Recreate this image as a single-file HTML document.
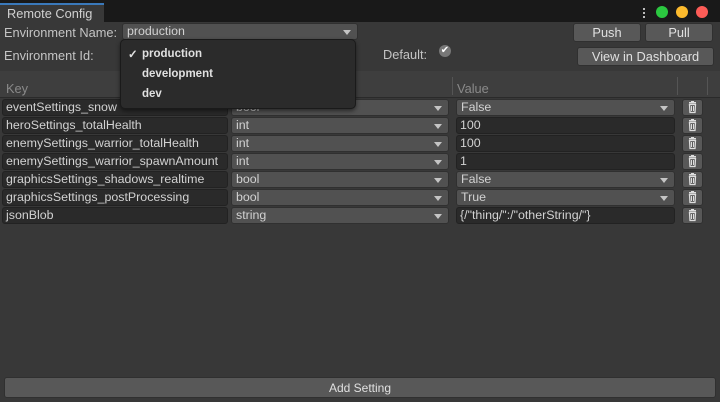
<!DOCTYPE html>
<html><head><style>
*{box-sizing:border-box;margin:0;padding:0}
body{width:720px;height:402px;background:#383838;font-family:"Liberation Sans",sans-serif;font-size:12.4px;color:#c4c4c4;position:relative;overflow:hidden}
.a{position:absolute}
.dd{background:#515151;border-radius:3px;border:1px solid #303030;padding-left:4px;line-height:15px;color:#d2d2d2}
.dd:after{content:"";position:absolute;right:6px;top:6px;border-left:4px solid transparent;border-right:4px solid transparent;border-top:5px solid #c4c4c4}
.tf{background:#2a2a2a;border:1px solid #222;border-radius:3px;padding-left:3px;line-height:15px;color:#d2d2d2}
.btn{background:#585858;border:1px solid #303030;border-radius:3px;text-align:center;color:#e0e0e0;line-height:17px;font-size:12.8px}
.tr{background:#585858;border:1px solid #303030;border-radius:3px;width:21px;height:17px}
</style></head><body>
<div class="a" style="left:0;top:0;width:720px;height:22px;background:#191919"></div>
<div class="a" style="left:0;top:3px;width:104px;height:19px;background:#383838;border-top:2px solid #3a79bb;padding-left:7px;line-height:17px;font-size:12.8px;color:#d0d0d0">Remote Config</div>
<div class="a" style="left:643px;top:8px;width:2px;height:10px;border-left:2px dotted #bbb"></div>
<div class="a" style="left:656px;top:6px;width:12px;height:12px;border-radius:50%;background:#2bc840"></div>
<div class="a" style="left:676px;top:6px;width:12px;height:12px;border-radius:50%;background:#fdbb2d"></div>
<div class="a" style="left:696px;top:6px;width:12px;height:12px;border-radius:50%;background:#fd5c57"></div>
<div class="a" style="left:4px;top:25px;font-size:12.8px">Environment Name:</div>
<div class="a dd" style="left:122px;top:23px;width:236px;height:17px">production</div>
<div class="a" style="left:4px;top:48px;font-size:12.8px">Environment Id:</div>
<div class="a" style="left:383px;top:47px;font-size:12.8px">Default:</div>
<div class="a" style="left:439px;top:45px;width:12px;height:12px;border-radius:50%;background:#777;color:#fff;font-size:10px;line-height:12px;text-align:center">✔</div>
<div class="a btn" style="left:573px;top:23px;width:68px;height:19px">Push</div>
<div class="a btn" style="left:645px;top:23px;width:68px;height:19px">Pull</div>
<div class="a btn" style="left:577px;top:47px;width:137px;height:19px">View in Dashboard</div>
<div class="a" style="left:0;top:71px;width:720px;height:27px;background:#3e3e3e;border-bottom:1px solid #2a2a2a"></div>
<div class="a" style="left:6px;top:81px;color:#8a8a8a;font-size:12.8px">Key</div>
<div class="a" style="left:457px;top:81px;color:#8a8a8a;font-size:12.8px">Value</div>
<div class="a" style="left:452px;top:77px;width:1px;height:18px;background:#555"></div>
<div class="a" style="left:677px;top:77px;width:1px;height:18px;background:#555"></div>
<div class="a" style="left:707px;top:77px;width:1px;height:18px;background:#555"></div>

<div id="rows"></div>
<script>
var R=[["eventSettings_snow","bool","False",1],["heroSettings_totalHealth","int","100",0],["enemySettings_warrior_totalHealth","int","100",0],["enemySettings_warrior_spawnAmount","int","1",0],["graphicsSettings_shadows_realtime","bool","False",1],["graphicsSettings_postProcessing","bool","True",1],["jsonBlob","string","{/\"thing/\":/\"otherString/\"}",0]];
var h="";R.forEach(function(r,i){var y=99+i*18;
h+='<div class="a tf" style="left:2px;top:'+y+'px;width:226px;height:17px">'+r[0]+'</div>';
h+='<div class="a dd" style="left:231px;top:'+y+'px;width:218px;height:17px">'+r[1]+'</div>';
h+='<div class="a '+(r[3]?'dd':'tf')+'" style="left:456px;top:'+y+'px;width:219px;height:17px">'+r[2].replace(/</g,"&lt;")+'</div>';
h+='<div class="a tr" style="left:682px;top:'+y+'px"><svg width="19" height="15" viewBox="0 0 19 15"><rect x="6" y="2" width="7" height="1.5" fill="#ddd"/><rect x="8" y="1" width="3" height="1.5" fill="#ddd"/><path d="M6.5 4.5h6l-.5 8h-5z" fill="none" stroke="#ddd" stroke-width="1.3"/><path d="M8.5 6v5M10.5 6v5" stroke="#ddd"/></svg></div>';});
document.getElementById("rows").innerHTML=h;
</script>
<div class="a" style="left:120px;top:39px;width:236px;height:70px;background:#2b2b2b;border:1px solid #1a1a1a;border-radius:5px;box-shadow:0 2px 4px rgba(0,0,0,.5);font-weight:bold;color:#e0e0e0;font-size:11.5px">
<div class="a" style="left:7px;top:7px">✓</div>
<div class="a" style="left:21px;top:8px">production</div>
<div class="a" style="left:21px;top:28px">development</div>
<div class="a" style="left:21px;top:48px">dev</div>
</div>
<div class="a btn" style="left:4px;top:377px;width:712px;height:21px;line-height:20px;font-size:12px">Add Setting</div>
</body></html>
